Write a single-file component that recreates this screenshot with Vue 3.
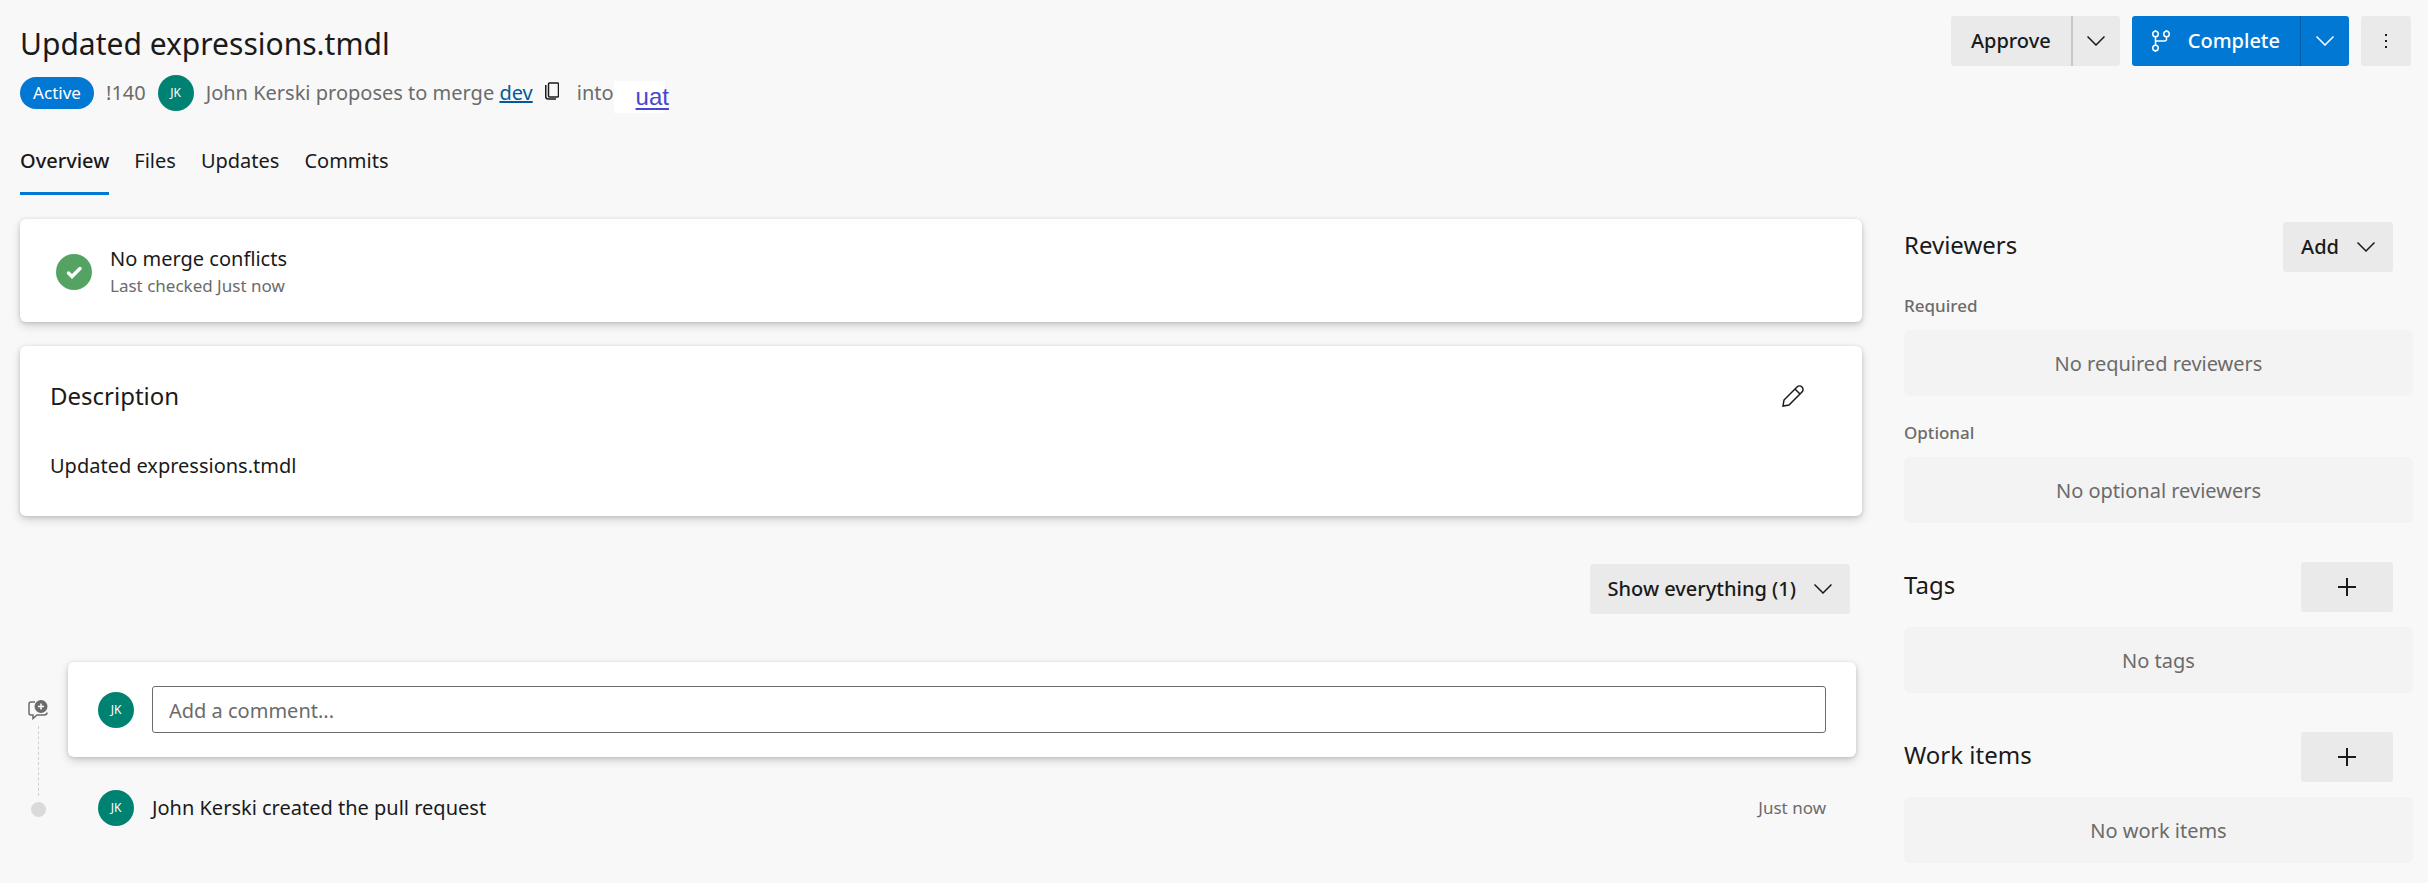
<script setup>
import { ref } from 'vue'

const tabs = ['Overview', 'Files', 'Updates', 'Commits']
const activeTab = ref('Overview')
const comment = ref('')

const reviewerGroups = [
  { label: 'Required', empty: 'No required reviewers' },
  { label: 'Optional', empty: 'No optional reviewers' },
]

const sections = [
  { title: 'Tags', empty: 'No tags' },
  { title: 'Work items', empty: 'No work items' },
]
</script>

<template>
  <div class="page">
    <header class="header">
      <div class="header-info">
        <h1>Updated expressions.tmdl</h1>
        <div class="status">
          <span class="pill">Active</span>
          <span class="number">!140</span>
          <span class="avatar">JK</span>
          <span class="proposal">John Kerski proposes to merge <a href="#dev">dev</a></span>
          <button class="icon-button copy" type="button" aria-label="Copy branch name">
            <svg width="14" height="18" viewBox="0 0 14 18" fill="none" stroke="#1a1a1a">
              <rect x="3.5" y="1" width="10" height="14" rx="1" stroke-width="1.5" />
              <path d="M0.75 3v11.5q0 2.5 2.5 2.5H11" stroke-width="1.5" />
            </svg>
          </button>
          <span class="into">into</span>
          <span class="target"><a href="#uat">uat</a></span>
        </div>
      </div>

      <div class="actions">
        <div class="split">
          <button class="button" type="button">Approve</button>
          <button class="button caret" type="button" aria-label="More approve options">
            <svg width="18" height="10" viewBox="0 0 18 10" fill="none" stroke="currentColor" stroke-width="1.5">
              <path d="M0.5 0.5 9 9l8.5-8.5" />
            </svg>
          </button>
        </div>
        <div class="split">
          <button class="button primary" type="button">
            <svg width="18" height="22" viewBox="0 0 18 22" fill="none" stroke="currentColor" stroke-width="1.5">
              <circle cx="3.5" cy="4" r="2.75" />
              <circle cx="14.5" cy="4" r="2.75" />
              <circle cx="3.5" cy="18" r="2.75" />
              <path d="M3.5 7v8M14.5 7v2q0 2-2 2h-9M3.5 0v1M14.5 0v1M3.5 21v1" />
            </svg>
            Complete
          </button>
          <button class="button primary caret" type="button" aria-label="More complete options">
            <svg width="18" height="10" viewBox="0 0 18 10" fill="none" stroke="currentColor" stroke-width="1.5">
              <path d="M0.5 0.5 9 9l8.5-8.5" />
            </svg>
          </button>
        </div>
        <button class="button more" type="button" aria-label="More actions">
          <svg width="2" height="14" viewBox="0 0 2 14" fill="currentColor">
            <path d="M0 0h2v2H0zM0 6h2v2H0zM0 12h2v2H0z" />
          </svg>
        </button>
      </div>
    </header>

    <nav class="tabs">
      <a
        v-for="tab in tabs"
        :key="tab"
        href="#"
        :class="{ active: tab === activeTab }"
        @click.prevent="activeTab = tab"
      >{{ tab }}</a>
    </nav>

    <div class="content">
      <main>
        <section class="card merge">
          <svg width="36" height="36" viewBox="0 0 36 36">
            <circle cx="18" cy="18" r="18" fill="#55a362" />
            <path d="m12.5 19 3.5 3.5 8-8" fill="none" stroke="#fff" stroke-width="3.5" stroke-linecap="round" />
          </svg>
          <div>
            <p>No merge conflicts</p>
            <p class="small">Last checked Just now</p>
          </div>
        </section>

        <section class="card description">
          <div class="description-header">
            <h2>Description</h2>
            <button class="icon-button" type="button" aria-label="Edit description">
              <svg width="22" height="22" viewBox="0 0 22 22" fill="none" stroke="#1a1a1a" stroke-width="1.5">
                <path d="M1 21 2 15 15 2a3.5 3.5 0 0 1 5 5L7 20zM13 4l5 5" />
              </svg>
            </button>
          </div>
          <p>Updated expressions.tmdl</p>
        </section>

        <div class="filter">
          <button class="button" type="button">
            Show everything (1)
            <svg width="18" height="10" viewBox="0 0 18 10" fill="none" stroke="currentColor" stroke-width="1.5">
              <path d="M0.5 0.5 9 9l8.5-8.5" />
            </svg>
          </button>
        </div>

        <div class="timeline">
          <div class="rail">
            <svg width="20" height="20" viewBox="0 0 20 20" fill="none" stroke="#6b6b6b" stroke-width="1.5">
              <path d="M7 2H3Q1 2 1 4v9q0 2 2 2h2v3.5L9 15h7q3 0 3-2.5" />
              <circle cx="13" cy="6.5" r="6.5" fill="#6b6b6b" stroke="none" />
              <path d="M13 3.5v6M10 6.5h6" stroke="#fff" />
            </svg>
            <span class="line"></span>
            <span class="dot"></span>
          </div>
          <div class="events">
            <div class="card comment">
              <span class="avatar">JK</span>
              <input v-model="comment" type="text" placeholder="Add a comment..." aria-label="Add a comment" />
            </div>
            <div class="event">
              <span class="avatar">JK</span>
              <p>John Kerski created the pull request</p>
              <time class="small">Just now</time>
            </div>
          </div>
        </div>
      </main>

      <aside>
        <div class="side-header">
          <h2>Reviewers</h2>
          <button class="button" type="button">
            Add
            <svg width="18" height="10" viewBox="0 0 18 10" fill="none" stroke="currentColor" stroke-width="1.5">
              <path d="M0.5 0.5 9 9l8.5-8.5" />
            </svg>
          </button>
        </div>
        <div class="groups">
          <div v-for="group in reviewerGroups" :key="group.label" class="group">
            <h3>{{ group.label }}</h3>
            <p class="empty">{{ group.empty }}</p>
          </div>
        </div>

        <section v-for="section in sections" :key="section.title" class="side-section">
          <div class="side-header">
            <h2>{{ section.title }}</h2>
            <button class="button add" type="button" :aria-label="'Add ' + section.title">
              <svg width="18" height="18" viewBox="0 0 18 18" fill="none" stroke="currentColor" stroke-width="2">
                <path d="M9 0v18M0 9h18" />
              </svg>
            </button>
          </div>
          <p class="empty">{{ section.empty }}</p>
        </section>
      </aside>
    </div>
  </div>
</template>

<style>
body {
  background: #f8f8f8;
}
</style>

<style scoped>
.page {
  padding: 16px 15px 20px 20px;
  color: #1a1a1a;
  font-family: 'Segoe UI', 'Noto Sans', sans-serif;
  font-size: 20px;
  line-height: 28px;
}

.page * {
  box-sizing: border-box;
}

h1,
h2,
h3,
p {
  margin: 0;
  font-weight: 400;
}

h1 {
  font-size: 30px;
  line-height: 56px;
}

h2 {
  font-size: 24px;
  line-height: 32px;
}

svg {
  flex: none;
}

.header {
  display: flex;
  justify-content: space-between;
  align-items: flex-start;
}

.status {
  display: flex;
  align-items: center;
  height: 42px;
  color: #6b6b6b;
}

.pill {
  width: 74px;
  border-radius: 16px;
  background: #0078d4;
  color: #fff;
  font-size: 17px;
  line-height: 32px;
  text-align: center;
}

.number {
  margin: 0 12px;
}

.avatar {
  flex: none;
  width: 36px;
  height: 36px;
  border-radius: 50%;
  background: #008272;
  color: #fff;
  font-size: 12px;
  line-height: 36px;
  text-align: center;
}

.proposal {
  margin-left: 12px;
}

.proposal a {
  color: #005a9e;
}

.icon-button {
  display: flex;
  padding: 0;
  border: none;
  background: none;
  cursor: pointer;
}

.copy {
  margin: 0 18px 4px 12px;
}

.target {
  width: 51px;
  margin-top: 8px;
  padding-left: 22px;
  background: #fff;
  font-family: 'Liberation Sans', Arial, sans-serif;
  font-size: 24px;
  line-height: 32px;
}

.target a {
  color: #4646d0;
  text-underline-offset: 3px;
}

.actions {
  display: flex;
  gap: 12px;
  margin-right: 2px;
}

.split {
  display: flex;
}

.button {
  display: flex;
  align-items: center;
  justify-content: center;
  gap: 18px;
  height: 50px;
  padding: 0 18px;
  border: none;
  border-radius: 3px;
  background: #eaeaea;
  color: #1a1a1a;
  font: inherit;
  font-weight: 500;
  cursor: pointer;
}

.split .button:first-child {
  padding: 0 20px;
  border-radius: 3px 0 0 3px;
}

.split .caret {
  width: 49px;
  padding: 0;
  border-left: 2px solid #c8c8c8;
  border-radius: 0 3px 3px 0;
}

.button.primary {
  background: #0078d4;
  color: #fff;
}

.split .primary.caret {
  border-left: 1px solid #005a9e;
}

.more {
  width: 50px;
  padding: 0;
}

.tabs {
  display: flex;
  gap: 25px;
  margin-top: 22px;
}

.tabs a {
  height: 59px;
  border-bottom: 3px solid transparent;
  color: #1a1a1a;
  line-height: 50px;
  text-decoration: none;
}

.tabs a.active {
  border-bottom-color: #0078d4;
  font-weight: 500;
}

.content {
  display: grid;
  grid-template-columns: minmax(0, 1fr) 509px;
  gap: 42px;
  margin-top: 24px;
}

.card {
  border-radius: 6px;
  background: #fff;
  box-shadow: 0 4px 10px rgba(0, 0, 0, 0.15), 0 1px 4px rgba(0, 0, 0, 0.14);
}

.merge {
  display: flex;
  align-items: center;
  gap: 18px;
  height: 103px;
  padding: 2px 36px 0;
}

.small {
  color: #6b6b6b;
  font-size: 17px;
  line-height: 26px;
}

.description {
  margin-top: 24px;
  padding: 34px 58px 36px 30px;
}

.description-header {
  display: flex;
  justify-content: space-between;
  align-items: center;
  margin-bottom: 40px;
}

.filter {
  display: flex;
  justify-content: flex-end;
  margin: 48px 12px 48px 0;
}

.timeline {
  display: flex;
  gap: 20px;
  margin-right: 6px;
}

.rail {
  display: flex;
  flex-direction: column;
  align-items: center;
  width: 28px;
  padding: 38px 0 0 8px;
}

.line {
  height: 70px;
  margin: 6px 0;
  border-left: 1px dashed #d0d0d0;
}

.dot {
  width: 15px;
  height: 15px;
  border-radius: 50%;
  background: #dadada;
}

.events {
  flex: 1;
}

.comment {
  display: flex;
  align-items: center;
  gap: 18px;
  padding: 24px 30px;
}

.comment input {
  flex: 1;
  min-width: 0;
  height: 47px;
  padding: 2px 16px 0;
  border: 1px solid #6b6b6b;
  border-radius: 3px;
  color: #1a1a1a;
  font: inherit;
}

.comment input::placeholder {
  color: #6b6b6b;
}

.event {
  display: flex;
  align-items: center;
  gap: 18px;
  padding: 33px 30px;
}

.event time {
  margin-left: auto;
}

.side-header {
  display: flex;
  justify-content: space-between;
  align-items: center;
  height: 50px;
  margin: 3px 20px 15px 0;
}

.side-header h2 {
  padding-bottom: 4px;
}

.add {
  width: 92px;
}

.groups {
  padding-top: 5px;
}

.group {
  margin-bottom: 23px;
}

.group h3 {
  margin-bottom: 10px;
  color: #6b6b6b;
  font-size: 17px;
  font-weight: 500;
  line-height: 28px;
}

.empty {
  padding-top: 2px;
  border-radius: 6px;
  background: #f3f3f3;
  color: #6b6b6b;
  line-height: 64px;
  text-align: center;
}

.side-section {
  margin-top: 39px;
}
</style>
